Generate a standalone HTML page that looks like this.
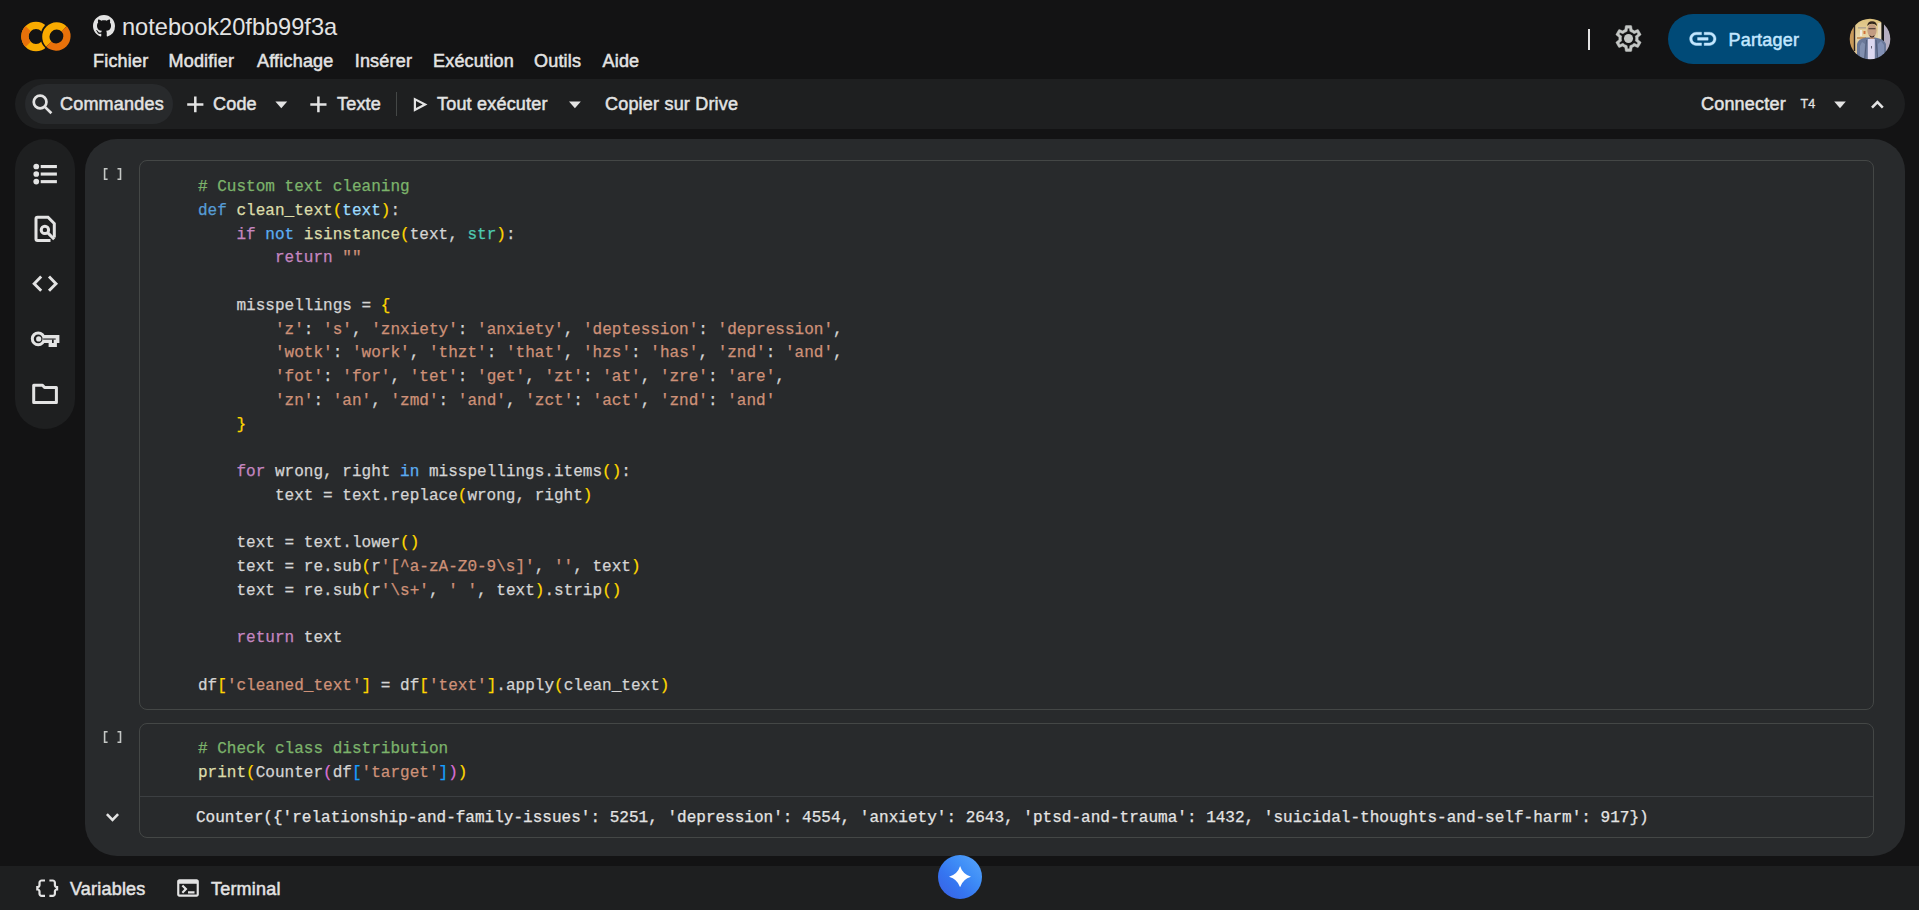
<!DOCTYPE html>
<html><head><meta charset="utf-8">
<style>
*{box-sizing:border-box;margin:0;padding:0}
html,body{width:1919px;height:910px;overflow:hidden;background:#131314}
body{position:relative;font-family:"Liberation Sans",sans-serif;color:#e3e3e3}
.a{position:absolute}
.t{position:absolute;white-space:pre;line-height:1;font-weight:normal;font-size:18px;letter-spacing:0.2px;-webkit-text-stroke:0.5px currentColor;color:#e3e3e3}
svg{position:absolute;display:block}
#toolbar{left:15px;top:79px;width:1890px;height:50px;border-radius:25px;background:#1e1f20}
#chip{left:25px;top:84px;width:148px;height:40px;border-radius:20px;background:#282a2c}
#side{left:15px;top:139px;width:60px;height:290px;border-radius:30px;background:#1e1f20}
#nb{left:85px;top:139px;width:1820px;height:717px;border-radius:32px;background:#282a2c}
#bottom{left:0;top:866px;width:1919px;height:44px;background:#1e1f20}
.cell{position:absolute;border:1px solid #444746;border-radius:8px}
.code{position:absolute;font-family:"Liberation Mono",monospace;font-size:16.04px;line-height:23.75px;white-space:pre;color:#d4d4d4;-webkit-text-stroke:0.25px currentColor}
.cm{color:#7cb36b}.kw{color:#569cd6}.ko{color:#5cadf2}.ct{color:#c586c0}.fn{color:#dcdcaa}.pa{color:#9cdcfe}.ty{color:#4ec9b0}.st{color:#ce9178}
.b1{color:#ffd700}.b2{color:#da70d6}.b3{color:#179fff}
.br{position:absolute;font-family:"Liberation Mono",monospace;font-size:13px;color:#c4c7c5;white-space:pre;line-height:1}
</style></head><body>

<!-- header -->
<svg style="left:0;top:0" width="90" height="70" viewBox="0 0 90 70">
  <defs>
    <mask id="cut" maskUnits="userSpaceOnUse" x="0" y="0" width="90" height="70">
      <rect x="0" y="0" width="90" height="70" fill="#fff"/>
      <circle cx="56.4" cy="36.5" r="16" fill="#000"/>
    </mask>
  </defs>
  <g mask="url(#cut)">
    <circle cx="36" cy="36.5" r="11.1" fill="none" stroke="#F9AB00" stroke-width="7.3"/>
    <path d="M28.15 28.65A11.1 11.1 0 0 0 28.15 44.35" fill="none" stroke="#E8710A" stroke-width="7.3"/>
  </g>
  <path d="M64.1 28.8A10.9 10.9 0 0 0 48.7 44.2" fill="none" stroke="#F9AB00" stroke-width="7.25"/>
  <path d="M48.7 44.2A10.9 10.9 0 0 0 64.1 28.8" fill="none" stroke="#E8710A" stroke-width="7.25"/>
</svg>

<svg style="left:93px;top:15px" width="22" height="22" viewBox="0 0 16 16"><path fill="#e3e3e3" d="M8 0C3.58 0 0 3.58 0 8c0 3.54 2.29 6.53 5.47 7.59.4.07.55-.17.55-.38 0-.19-.01-.82-.01-1.49-2.01.37-2.53-.49-2.69-.94-.09-.23-.48-.94-.82-1.13-.28-.15-.68-.52-.01-.53.63-.01 1.08.58 1.23.82.72 1.21 1.87.87 2.33.66.07-.52.28-.87.51-1.07-1.78-.2-3.64-.89-3.64-3.95 0-.87.31-1.59.82-2.15-.08-.2-.36-1.02.08-2.12 0 0 .67-.21 2.2.82.64-.18 1.32-.27 2-.27.68 0 1.36.09 2 .27 1.53-1.04 2.2-.82 2.2-.82.44 1.1.16 1.92.08 2.12.51.56.82 1.27.82 2.15 0 3.07-1.87 3.75-3.65 3.95.29.25.54.73.54 1.48 0 1.07-.01 1.93-.01 2.2 0 .21.15.46.55.38A8.013 8.013 0 0016 8c0-4.42-3.58-8-8-8z"/></svg>
<div class="t" style="left:122px;top:16px;font-size:23.6px;letter-spacing:0;-webkit-text-stroke:0">notebook20fbb99f3a</div>

<div class="t" style="left:93px;top:51.6px">Fichier</div>
<div class="t" style="left:168.5px;top:51.6px">Modifier</div>
<div class="t" style="left:257px;top:51.6px">Affichage</div>
<div class="t" style="left:354.7px;top:51.6px">Insérer</div>
<div class="t" style="left:433px;top:51.6px">Exécution</div>
<div class="t" style="left:534px;top:51.6px">Outils</div>
<div class="t" style="left:602.5px;top:51.6px">Aide</div>

<div class="a" style="left:1588px;top:29px;width:2px;height:21px;background:#e3e3e3"></div>
<svg style="left:1612.6px;top:23.3px" width="31" height="31" viewBox="0 0 24 24"><path fill="#c4c7c5" stroke="#c4c7c5" stroke-width="0.35" d="M19.43 12.98c.04-.32.07-.64.07-.98 0-.34-.03-.66-.07-.98l2.11-1.65c.19-.15.24-.42.12-.64l-2-3.46c-.09-.16-.26-.25-.44-.25-.06 0-.12.01-.17.03l-2.49 1c-.52-.4-1.08-.73-1.69-.98l-.38-2.65C14.46 2.18 14.25 2 14 2h-4c-.25 0-.46.18-.49.42l-.38 2.65c-.61.25-1.17.59-1.69.98l-2.490-1c-.06-.02-.12-.03-.18-.03-.17 0-.34.09-.43.25l-2 3.46c-.13.22-.07.49.12.64l2.11 1.65c-.04.32-.07.65-.07.98 0 .33.03.66.07.98l-2.11 1.65c-.19.15-.24.42-.12.64l2 3.46c.09.16.26.25.44.25.06 0 .12-.01.17-.03l2.49-1c.52.4 1.08.73 1.69.98l.38 2.65c.03.24.24.42.49.42h4c.25 0 .46-.18.49-.42l.38-2.65c.61-.25 1.17-.59 1.69-.98l2.49 1c.06.02.12.03.18.03.17 0 .34-.09.43-.25l2-3.46c.12-.22.07-.49-.12-.64l-2.11-1.65zm-1.98-1.71c.04.31.05.52.05.73 0 .21-.02.43-.05.73l-.14 1.13.89.7 1.08.84-.7 1.21-1.27-.51-1.04-.42-.9.68c-.43.32-.84.56-1.25.73l-1.06.43-.16 1.13-.2 1.35h-1.4l-.19-1.35-.16-1.13-1.06-.43c-.43-.18-.83-.41-1.23-.71l-.91-.7-1.06.43-1.27.51-.7-1.21 1.08-.84.89-.7-.14-1.13c-.03-.31-.05-.54-.05-.74s.02-.43.05-.73l.14-1.13-.89-.7-1.08-.84.7-1.21 1.27.51 1.04.42.9-.68c.43-.32.84-.56 1.25-.73l1.06-.43.16-1.13.2-1.35h1.39l.19 1.35.16 1.13 1.06.43c.43.18.83.41 1.23.71l.91.7 1.06-.43 1.27-.51.7 1.21-1.07.85-.89.7.14 1.13z"/><circle cx="12" cy="12" r="3.5" fill="#c4c7c5"/></svg>
<div class="a" style="left:1668px;top:14px;width:157px;height:50px;border-radius:25px;background:#004a77"></div>
<svg style="left:1687.4px;top:23.4px" width="31.7" height="31.7" viewBox="0 0 24 24"><path fill="#c2e7ff" stroke="#c2e7ff" stroke-width="0.3" d="M3.9 12c0-1.71 1.39-3.1 3.1-3.1h4V7H7c-2.76 0-5 2.24-5 5s2.240 5 5 5h4v-1.9H7c-1.71 0-3.1-1.39-3.1-3.1zM8 13h8v-2H8v2zm9-6h-4v1.9h4c1.71 0 3.1 1.39 3.1 3.1s-1.39 3.1-3.1 3.1h-4V17h4c2.76 0 5-2.24 5-5s-2.24-5-5-5z"/></svg>
<div class="t" style="left:1728.5px;top:31px;color:#c2e7ff">Partager</div>
<svg style="left:1848px;top:17px" width="44" height="44" viewBox="1848 17 44 44">
  <defs>
    <clipPath id="avc"><circle cx="1870" cy="39" r="20.3"/></clipPath>
    <filter id="avb" x="-10%" y="-10%" width="120%" height="120%"><feGaussianBlur stdDeviation="0.55"/></filter>
    <linearGradient id="avbg" x1="0" y1="0" x2="0" y2="1"><stop offset="0" stop-color="#dcbf78"/><stop offset="0.45" stop-color="#e8d6aa"/><stop offset="1" stop-color="#cfb488"/></linearGradient>
  </defs>
  <g clip-path="url(#avc)">
    <g filter="url(#avb)">
    <rect x="1848" y="17" width="44" height="44" fill="url(#avbg)"/>
    <rect x="1848" y="17" width="6" height="44" fill="#c99a5a"/>
    <rect x="1853.8" y="24" width="1.4" height="27" fill="#2a2420"/>
    <rect x="1858" y="27" width="8" height="1.6" fill="#b4a690"/>
    <rect x="1860" y="30" width="2" height="6" fill="#f2ece0"/>
    <rect x="1863.5" y="31" width="2" height="3" fill="#d2703e"/>
    <rect x="1857" y="37" width="9" height="2" fill="#c89860"/>
    <rect x="1878" y="23" width="3.5" height="17" fill="#eadcc0"/>
    <rect x="1881.4" y="18" width="2.6" height="23" fill="#141414"/>
    <rect x="1884" y="17" width="8" height="44" fill="#b5aec0"/>
    <path d="M1857 61V44Q1858 39 1866 37.6H1875Q1884 39 1886 44V61Z" fill="#6a7899"/>
    <path d="M1860 61V46L1862 42L1865 44L1864 61Z" fill="#8290b0"/><path d="M1866.5 40L1864.5 61" stroke="#4a5472" stroke-width="0.8"/><path d="M1876 40L1878 61" stroke="#4a5472" stroke-width="0.8"/>
    <path d="M1878 61V44L1881 41L1884 45V61Z" fill="#8290b4"/>
    <rect x="1867.8" y="39" width="7" height="22" fill="#dcd8f0"/>
    <rect x="1871" y="46" width="0.9" height="2.5" fill="#5a5a6a"/>
    <rect x="1869.8" y="34" width="4.5" height="5" fill="#b88e74"/>
    <ellipse cx="1872" cy="30.5" rx="4.6" ry="6.6" fill="#c39c82"/>
    <path d="M1867.2 26Q1867.5 21.2 1872 21.2Q1876.8 21.2 1877 26Q1875 23.8 1872 23.8Q1869 23.8 1867.2 26Z" fill="#33251e"/>
    <rect x="1868.5" y="28" width="7" height="1.3" fill="#5a463c"/>
    <path d="M1869.5 35Q1872 37.8 1874.5 35L1874 36.8Q1872 38 1870 36.8Z" fill="#2e221c"/>
    </g>
  </g>
</svg>

<!-- toolbar -->
<div id="toolbar" class="a"></div>
<div id="chip" class="a"></div>
<svg style="left:0;top:80px" width="60" height="40" viewBox="0 80 60 40"><g fill="none" stroke="#e3e3e3" stroke-width="2.7"><circle cx="40.1" cy="102" r="6.35"/><path d="M44.6 106.6L51.4 113.3"/></g></svg>
<div class="t" style="left:60px;top:94.8px">Commandes</div>
<svg style="left:180px;top:90px" width="30" height="30" viewBox="180 90 30 30"><path d="M187.2 104.4H203.4M195.3 96.6V112.2" stroke="#e3e3e3" stroke-width="2.5" fill="none"/></svg>
<div class="t" style="left:213px;top:94.8px">Code</div>
<svg style="left:270px;top:95px" width="22" height="18" viewBox="270 95 22 18"><path d="M275.4 101.4H287.2L281.3 108.3Z" fill="#e3e3e3"/></svg>
<svg style="left:303px;top:90px" width="30" height="30" viewBox="303 90 30 30"><path d="M310.3 104.4H326.5M318.4 96.6V112.2" stroke="#e3e3e3" stroke-width="2.5" fill="none"/></svg>
<div class="t" style="left:337px;top:94.8px">Texte</div>
<div class="a" style="left:396px;top:92px;width:1px;height:24px;background:#444746"></div>
<svg style="left:408px;top:92px" width="26" height="26" viewBox="408 92 26 26"><path fill="#e3e3e3" fill-rule="evenodd" d="M413.8 97.5L427.5 104.6L413.8 111.8ZM416 101.1L422.7 104.6L416 108.1Z"/></svg>
<div class="t" style="left:437px;top:94.8px">Tout exécuter</div>
<svg style="left:564px;top:95px" width="22" height="18" viewBox="564 95 22 18"><path d="M569 101.4H580.8L574.9 108.3Z" fill="#e3e3e3"/></svg>
<div class="t" style="left:605px;top:94.8px">Copier sur Drive</div>
<div class="t" style="left:1701px;top:94.8px">Connecter</div>
<div class="t" style="left:1800.5px;top:98.2px;font-size:12.5px;letter-spacing:0;-webkit-text-stroke:0.3px currentColor">T4</div>
<svg style="left:1830px;top:95px" width="22" height="18" viewBox="1830 95 22 18"><path d="M1834.2 101.4H1845.8L1840 108.2Z" fill="#e3e3e3"/></svg>
<svg style="left:1865px;top:92px" width="26" height="22" viewBox="1865 92 26 22"><path d="M1872 107.6L1877.4 102.2L1882.8 107.6" stroke="#e3e3e3" stroke-width="2.6" fill="none"/></svg>

<div id="side" class="a"></div>
<svg style="left:0;top:0" width="80" height="430" viewBox="0 0 80 430">
  <g fill="#e3e3e3">
    <circle cx="36.25" cy="166.5" r="2.85"/><circle cx="36.25" cy="174" r="2.85"/><circle cx="36.25" cy="181.6" r="2.85"/>
    <rect x="40.7" y="165" width="16.2" height="3.1"/><rect x="40.7" y="172.5" width="16.2" height="3.1"/><rect x="40.7" y="180.1" width="16.2" height="3.1"/>
  </g>
  <g fill="none" stroke="#e3e3e3" stroke-width="3">
    <path d="M50.5 240.4H37.5Q36 240.4 36 238.9V218.7Q36 217.2 37.5 217.2H48L54.3 223.5V237.5"/>
    <path d="M47.6 232.6L54.2 239.2"/>
    <circle cx="44.9" cy="229.9" r="3.7"/>
    <path d="M41.2 276.6L34.2 283.7L41.2 290.8M49 276.6L56 283.7L49 290.8" stroke-width="2.9"/>
    <circle cx="38.2" cy="338.85" r="5.9"/>
    <path d="M33.7 385.3H42.5L44.6 387.6H56.4V402.5H33.7Z" stroke-linejoin="round"/>
  </g>
  <g fill="#e3e3e3">
    <circle cx="38.7" cy="338.9" r="2.6"/>
    <path d="M43.5 334.9H59.4V342.9H56.9V347H48.6V342.9H43.5Z"/>
  </g>
  <g fill="#1e1f20">
    <rect x="43.1" y="338.5" width="12.6" height="1.1"/>
    <rect x="52" y="339.5" width="1.7" height="3.5"/>
  </g>
</svg>
<div id="nb" class="a"></div>
<svg style="left:100px;top:165px" width="26" height="18" viewBox="100 165 26 18"><path d="M107.6 168.8H104.6V179.2H107.6M117.5 168.8H120.5V179.2H117.5" fill="none" stroke="#c4c7c5" stroke-width="1.6"/></svg>
<div class="cell" style="left:139px;top:160px;width:1735px;height:550px"></div>
<div class="code" style="left:198px;top:176px"><span class="cm"># Custom text cleaning</span>
<span class="kw">def</span> <span class="fn">clean_text</span><span class="b1">(</span><span class="pa">text</span><span class="b1">)</span>:
    <span class="ct">if</span> <span class="ko">not</span> <span class="fn">isinstance</span><span class="b1">(</span>text, <span class="ty">str</span><span class="b1">)</span>:
        <span class="ct">return</span> <span class="st">""</span>

    misspellings = <span class="b1">{</span>
        <span class="st">'z'</span>: <span class="st">'s'</span>, <span class="st">'znxiety'</span>: <span class="st">'anxiety'</span>, <span class="st">'deptession'</span>: <span class="st">'depression'</span>,
        <span class="st">'wotk'</span>: <span class="st">'work'</span>, <span class="st">'thzt'</span>: <span class="st">'that'</span>, <span class="st">'hzs'</span>: <span class="st">'has'</span>, <span class="st">'znd'</span>: <span class="st">'and'</span>,
        <span class="st">'fot'</span>: <span class="st">'for'</span>, <span class="st">'tet'</span>: <span class="st">'get'</span>, <span class="st">'zt'</span>: <span class="st">'at'</span>, <span class="st">'zre'</span>: <span class="st">'are'</span>,
        <span class="st">'zn'</span>: <span class="st">'an'</span>, <span class="st">'zmd'</span>: <span class="st">'and'</span>, <span class="st">'zct'</span>: <span class="st">'act'</span>, <span class="st">'znd'</span>: <span class="st">'and'</span>
    <span class="b1">}</span>

    <span class="ct">for</span> wrong, right <span class="ko">in</span> misspellings.items<span class="b1">()</span>:
        text = text.replace<span class="b1">(</span>wrong, right<span class="b1">)</span>

    text = text.lower<span class="b1">()</span>
    text = re.sub<span class="b1">(</span>r<span class="st">'[^a-zA-Z0-9\s]'</span>, <span class="st">''</span>, text<span class="b1">)</span>
    text = re.sub<span class="b1">(</span>r<span class="st">'\s+'</span>, <span class="st">' '</span>, text<span class="b1">)</span>.strip<span class="b1">()</span>

    <span class="ct">return</span> text

df<span class="b1">[</span><span class="st">'cleaned_text'</span><span class="b1">]</span> = df<span class="b1">[</span><span class="st">'text'</span><span class="b1">]</span>.apply<span class="b1">(</span>clean_text<span class="b1">)</span></div>
<svg style="left:100px;top:728px" width="26" height="18" viewBox="100 728 26 18"><path d="M107.6 731.8H104.6V742.2H107.6M117.5 731.8H120.5V742.2H117.5" fill="none" stroke="#c4c7c5" stroke-width="1.6"/></svg>
<div class="cell" style="left:139px;top:723px;width:1735px;height:114.5px"></div>
<div class="a" style="left:140px;top:796px;width:1733px;height:1px;background:#3c3f42"></div>
<div class="code" style="left:198px;top:738.2px"><span class="cm"># Check class distribution</span>
<span class="fn">print</span><span class="b1">(</span>Counter<span class="b2">(</span>df<span class="b3">[</span><span class="st">'target'</span><span class="b3">]</span><span class="b2">)</span><span class="b1">)</span></div>
<svg style="left:100px;top:805px" width="26" height="22" viewBox="100 805 26 22"><path d="M106.9 814.2L112.5 819.8L118.1 814.2" fill="none" stroke="#e3e3e3" stroke-width="2.6"/></svg>
<div class="code" style="left:196px;top:806.8px;color:#e3e3e3">Counter({'relationship-and-family-issues': 5251, 'depression': 4554, 'anxiety': 2643, 'ptsd-and-trauma': 1432, 'suicidal-thoughts-and-self-harm': 917})</div>
<div id="bottom" class="a"></div>
<svg style="left:33.8px;top:875.4px" width="26.4" height="26.4" viewBox="0 0 24 24"><path fill="#e3e3e3" d="M4 7v2c0 .55-.45 1-1 1H2v4h1c.55 0 1 .45 1 1v2c0 1.65 1.35 3 3 3h3v-2H7c-.55 0-1-.45-1-1v-2c0-1.3-.84-2.42-2-2.83v-.34C5.16 11.42 6 10.3 6 9V7c0-.55.45-1 1-1h3V4H7C5.35 4 4 5.350 4 7zM21 10c-.55 0-1-.45-1-1V7c0-1.65-1.35-3-3-3h-3v2h3c.55 0 1 .45 1 1v2c0 1.3.84 2.42 2 2.83v.34c-1.16.41-2 1.52-2 2.83v2c0 .55-.45 1-1 1h-3v2h3c1.65 0 3-1.35 3-3v-2c0-.55.45-1 1-1h1v-4h-1z"/></svg>
<div class="t" style="left:70px;top:879.5px">Variables</div>
<svg style="left:175.2px;top:875.2px" width="26" height="26" viewBox="0 0 24 24"><path fill="#e3e3e3" d="M20 4H4c-1.11 0-2 .9-2 2v12c0 1.1.89 2 2 2h16c1.1 0 2-.9 2-2V6c0-1.1-.89-2-2-2zm0 14H4V8h16v10zm-2-1h-6v-2h6v2zM7.5 17l-1.41-1.41L8.67 13l-2.59-2.59L7.5 9l4 4-4 4z"/></svg>
<div class="t" style="left:211px;top:879.5px">Terminal</div>
<div class="a" style="left:938px;top:855px;width:44px;height:44px;border-radius:50%;background:linear-gradient(45deg,#3b5fe2 0%,#3574f0 35%,#3f8ef7 65%,#5aa6fa 100%)"></div>
<svg style="left:949px;top:866px" width="22.2" height="21.4" viewBox="0 0 24 24" preserveAspectRatio="none"><path fill="#fff" d="M12 24A17.5 17.5 0 0 0 0 12 17.5 17.5 0 0 0 12 0a17.5 17.5 0 0 0 12 12 17.5 17.5 0 0 0-12 12"/></svg>

</body></html>
